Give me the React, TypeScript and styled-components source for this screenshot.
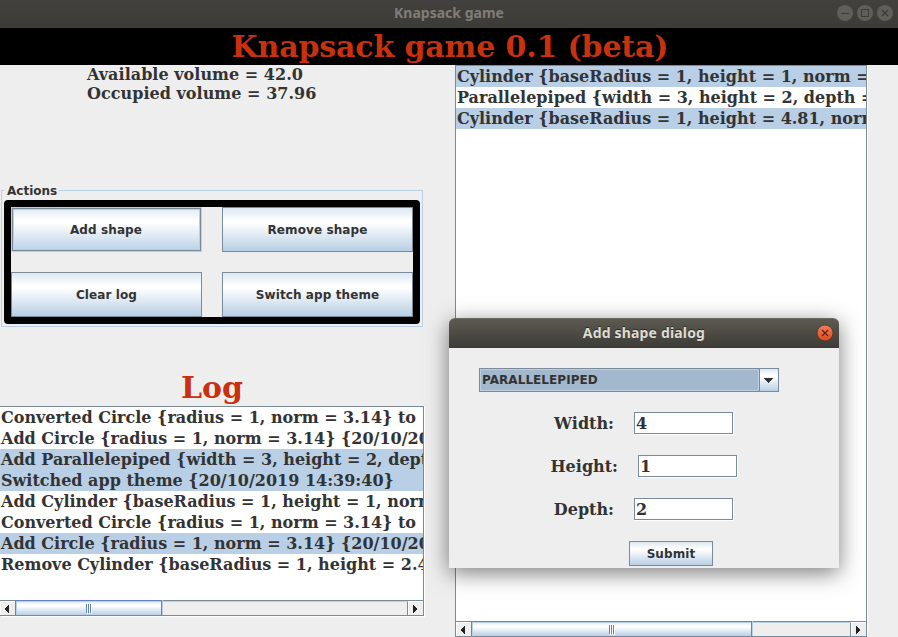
import React from "react";
import styled, { createGlobalStyle, css } from "styled-components";

const GlobalStyle = createGlobalStyle`
  * { box-sizing: border-box; }
  body { margin: 0; overflow: hidden; background: #eeeeee; }
`;

const metal = "linear-gradient(#dde8f3 0%, #ffffff 30%, #ffffff 34%, #b8cfe5 100%)";
const serif = `"DejaVu Serif", serif`;
const sans = `"DejaVu Sans", sans-serif`;

const Desktop = styled.main`
  position: relative;
  width: 898px;
  height: 637px;
  overflow: hidden;
  display: flex;
  flex-direction: column;
  background: #eeeeee;
  color: #333333;
  font: bold 16px/19px ${serif};
  white-space: nowrap;
`;

const TitleBar = styled.header<{ $active?: boolean }>`
  flex: none;
  display: grid;
  grid-template-columns: 1fr auto 1fr;
  align-items: center;
  height: ${(p) => (p.$active ? 30 : 28)}px;
  padding: 0 4px 2px 4px;
  font: bold 14px/20px "Noto Sans", sans-serif;
  ${(p) =>
    p.$active
      ? css`
          padding-left: 5px;
          padding-right: 5px;
          color: #dfdbd2;
          letter-spacing: 0.17px;
          background: linear-gradient(#5c5a50, #3c3b37);
          border-top: 1px solid #6a685f;
          border-radius: 6px 6px 0 0;
          text-shadow: 0 -1px #2b2a27;
        `
      : css`
          color: #807d78;
          background: linear-gradient(#42413d, #3c3b37);
        `}
`;

const TitleText = styled.span<{ $width: number }>`
  grid-column: 2;
  width: ${(p) => p.$width}px;
  text-align: center;
`;

const WindowButtons = styled.div`
  justify-self: end;
  display: flex;
  gap: 2px;
  svg { display: block; }
`;

const Banner = styled.h1`
  flex: none;
  height: 37px;
  margin: 0;
  padding-left: 2px;
  background: #000;
  color: #c9300e;
  font: bold 30px/37px ${serif};
  letter-spacing: -0.14px;
  text-align: center;
`;

const Body = styled.div`
  flex: 1;
  display: flex;
  gap: 31px;
`;

const LeftColumn = styled.section`
  width: 424px;
  display: flex;
  flex-direction: column;
`;

const Stats = styled.div`
  height: 118px;
  padding-left: 87px;
  letter-spacing: 0.03px;
`;

const Actions = styled.fieldset`
  margin: 0 1px 0 1px;
  height: 144px;
  min-width: 0;
  padding: 0 2px;
  border: 1px solid #b8cfe5;
  legend {
    height: 15px;
    padding: 0 2px 0 3px;
    margin-left: 0;
    font: bold 12px/17px ${sans};
  }
`;

const ActionGrid = styled.div`
  display: grid;
  grid-template-columns: 191px 191px;
  grid-template-rows: 45px 45px;
  gap: 20px;
  width: 416px;
  margin-top: 2px;
  border: 7px solid #000;
  border-radius: 4px;
`;

const Button = styled.button<{ $focused?: boolean }>`
  padding: 2px 0 0;
  border: 1px solid #7a8a99;
  background: ${metal};
  color: #333;
  font: bold 12px/15px ${sans};
  letter-spacing: 0.1px;
  ${(p) =>
    p.$focused &&
    css`
      padding-right: 1px;
      border-color: #b8cfe5;
      box-shadow: inset 0 0 0 1px #7a8a99, inset 0 0 0 2px #b8cfe5;
      background-origin: border-box;
    `}
`;

const LogTitle = styled.h2`
  height: 79px;
  margin: 0;
  padding-top: 43px;
  color: #c9300e;
  font: bold 30px/36px ${serif};
  text-align: center;
`;

const ScrollPane = styled.section<{ $width: number; $height: number; $clipped?: boolean }>`
  flex: none;
  display: flex;
  flex-direction: column;
  width: ${(p) => p.$width}px;
  height: ${(p) => p.$height}px;
  border: 1px solid #7a8a99;
  border-left-width: ${(p) => (p.$clipped ? 0 : 1)}px;
  background: #fff;
  box-shadow: 1px 1px #fff;
`;

const Items = styled.ul`
  flex: 1;
  margin: 0;
  padding: 0;
  list-style: none;
  overflow: hidden;
`;

const Item = styled.li<{ $selected?: boolean }>`
  height: 21px;
  padding-left: 1px;
  line-height: 21px;
  background: ${(p) => (p.$selected ? "#b8cfe5" : "#fff")};
`;

const ScrollBar = styled.div`
  flex: none;
  display: flex;
  height: 15px;
  border-top: 1px solid #7a8a99;
  background: #eeeeee;
`;

const Arrow = styled.span<{ $end?: boolean }>`
  display: flex;
  flex: none;
  align-items: center;
  justify-content: center;
  width: 15px;
  height: 14px;
  border-top: 1px solid #fff;
  ${(p) =>
    p.$end
      ? css`width: 16px; border-left: 1px solid #7a8a99; box-shadow: inset 1px 0 #fff;`
      : css`border-left: 1px solid #fff; padding-right: 3px;`}
`;

const Track = styled.span`
  flex: 1;
  display: flex;
  box-shadow: inset 0 1px #b8cfe5;
`;

const Thumb = styled.span<{ $width: number }>`
  display: flex;
  justify-content: center;
  align-items: center;
  gap: 1px;
  width: ${(p) => p.$width}px;
  height: 15px;
  margin-top: -1px;
  border: 1px solid #6382bf;
  border-bottom: 0;
  background: linear-gradient(#dde8f3, #fff 30%, #fff 35%, #b8cfe5);
  box-shadow: inset 1px 1px #b8cfe5, 1px 0 #b8cfe5;
  i {
    width: 1px;
    height: 9px;
    background: #6382bf;
    box-shadow: 1px 1px #fff;
  }
`;

const Dialog = styled.section`
  position: absolute;
  left: 449px;
  top: 318px;
  width: 390px;
  height: 250px;
  display: flex;
  flex-direction: column;
  background: #eeeeee;
  border-radius: 6px 6px 0 0;
  box-shadow: 0 5px 22px rgba(0, 0, 0, 0.52);
`;

const Form = styled.div`
  display: flex;
  flex-direction: column;
  align-items: center;
  padding-top: 20px;
`;

const Combo = styled.div`
  display: grid;
  grid-template-columns: 1fr 19px;
  width: 300px;
  height: 24px;
  margin-right: 60px;
  align-self: flex-end;
  border: 1px solid #7a8a99;
  font: bold 12px/20px ${sans};
  letter-spacing: 0.05px;
`;

const ComboValue = styled.span`
  padding-left: 1px;
  border: 1px solid #b8cfe5;
  background: #a3b8cc;
`;

const ComboArrow = styled.span`
  display: flex;
  align-items: center;
  justify-content: center;
  padding: 1px 2px 0 0;
  border-left: 1px solid #7a8a99;
  background: ${metal};
`;

const Fields = styled.div`
  width: 390px;
  display: flex;
  flex-direction: column;
  align-items: center;
`;

const Field = styled.label<{ $wide?: boolean }>`
  display: flex;
  gap: 20px;
  height: 22px;
  margin-top: ${(p) => (p.$wide ? 21 : 20)}px;
  line-height: 24px;
`;

const FieldName = styled.span<{ $width: number }>`
  display: flex;
  justify-content: flex-end;
  width: ${(p) => p.$width}px;
`;

const Input = styled.input`
  width: 99px;
  height: 22px;
  margin-right: 1px;
  padding: 1px 1px 0;
  border: 1px solid #7a8a99;
  border-radius: 0;
  outline: 0;
  background: #fff;
  box-shadow: 1px 1px #fff;
  color: #333;
  font: bold 16px/19px ${serif};
`;

const Submit = styled(Button)`
  width: 84px;
  height: 25px;
  margin: 21px 0 0 54px;
`;

function Triangle({ dir }: { dir: "left" | "right" }) {
  return (
    <svg width="5" height="8" viewBox="0 0 5 8" shapeRendering="crispEdges">
      <path d={dir === "left" ? "M5 0v8L0 4z" : "M0 0v8L5 4z"} fill="#222" />
    </svg>
  );
}

function HScroll({ thumb }: { thumb: number }) {
  return (
    <ScrollBar>
      <Arrow><Triangle dir="left" /></Arrow>
      <Track><Thumb $width={thumb}><i /><i /><i /></Thumb></Track>
      <Arrow $end><Triangle dir="right" /></Arrow>
    </ScrollBar>
  );
}

function WindowButton({ kind, active }: { kind: "min" | "max" | "close"; active?: boolean }) {
  const ink = active ? "#5a2412" : "#3c3b37";
  return (
    <svg width="18" height="18" viewBox="0 0 18 18">
      <defs>
        <linearGradient id="closeFill" x2="0" y2="1">
          <stop stopColor="#f37e5b" />
          <stop offset="1" stopColor="#df4a16" />
        </linearGradient>
      </defs>
      <circle cx="9" cy="9" r="8" fill={active ? "url(#closeFill)" : "#605e58"} stroke={active ? "#33322e" : "none"} strokeWidth=".7" />
      {kind === "min" && <path d="M5 9.5h8" stroke={ink} />}
      {kind === "max" && <rect x="5.5" y="5.5" width="7" height="7" fill="none" stroke={ink} />}
      {kind === "close" && <path d="M6 6l6 6M12 6l-6 6" stroke={ink} strokeWidth="1.2" />}
    </svg>
  );
}

const logItems: [string, boolean?][] = [
  ["Converted Circle {radius = 1, norm = 3.14} to "],
  ["Add Circle {radius = 1, norm = 3.14} {20/10/2019 14:39:30}"],
  ["Add Parallelepiped {width = 3, height = 2, depth = 4}", true],
  ["Switched app theme {20/10/2019 14:39:40}", true],
  ["Add Cylinder {baseRadius = 1, height = 1, norm = 3.14}"],
  ["Converted Circle {radius = 1, norm = 3.14} to "],
  ["Add Circle {radius = 1, norm = 3.14} {20/10/2019 14:39:50}", true],
  ["Remove Cylinder {baseRadius = 1, height = 2.4}"],
];

const shapes: [string, boolean?][] = [
  ["Cylinder {baseRadius = 1, height = 1, norm = 3.14}", true],
  ["Parallelepiped {width = 3, height = 2, depth = 4}"],
  ["Cylinder {baseRadius = 1, height = 4.81, norm = 15.1}", true],
];

function List({ items }: { items: [string, boolean?][] }) {
  return (
    <Items>
      {items.map(([text, selected], i) => (
        <Item key={i} $selected={selected}>{text}</Item>
      ))}
    </Items>
  );
}

export default function App() {
  return (
    <Desktop>
      <GlobalStyle />
      <TitleBar>
        <TitleText $width={120}>Knapsack game</TitleText>
        <WindowButtons>
          <WindowButton kind="min" />
          <WindowButton kind="max" />
          <WindowButton kind="close" />
        </WindowButtons>
      </TitleBar>
      <Banner>Knapsack game 0.1 (beta)</Banner>
      <Body>
        <LeftColumn>
          <Stats>
            <div>Available volume = 42.0</div>
            <div>Occupied volume = 37.96</div>
          </Stats>
          <Actions>
            <legend>Actions</legend>
            <ActionGrid>
              <Button $focused>Add shape</Button>
              <Button>Remove shape</Button>
              <Button>Clear log</Button>
              <Button>Switch app theme</Button>
            </ActionGrid>
          </Actions>
          <LogTitle>Log</LogTitle>
          <ScrollPane $width={424} $height={210} $clipped>
            <List items={logItems} />
            <HScroll thumb={147} />
          </ScrollPane>
        </LeftColumn>
        <ScrollPane $width={412} $height={572}>
          <List items={shapes} />
          <HScroll thumb={281} />
        </ScrollPane>
      </Body>
      <Dialog>
        <TitleBar $active>
          <TitleText $width={130}>Add shape dialog</TitleText>
          <WindowButtons><WindowButton kind="close" active /></WindowButtons>
        </TitleBar>
        <Form>
          <Combo>
            <ComboValue>PARALLELEPIPED</ComboValue>
            <ComboArrow>
              <svg width="10" height="5" viewBox="0 0 10 5" shapeRendering="crispEdges">
                <path d="M0 0h10L5 5z" fill="#333" />
              </svg>
            </ComboArrow>
          </Combo>
          <Fields>
            <Field><FieldName $width={60}>Width:</FieldName><Input defaultValue="4" /></Field>
            <Field $wide><FieldName $width={68}>Height:</FieldName><Input defaultValue="1" /></Field>
            <Field $wide><FieldName $width={60}>Depth:</FieldName><Input defaultValue="2" /></Field>
          </Fields>
          <Submit>Submit</Submit>
        </Form>
      </Dialog>
    </Desktop>
  );
}
